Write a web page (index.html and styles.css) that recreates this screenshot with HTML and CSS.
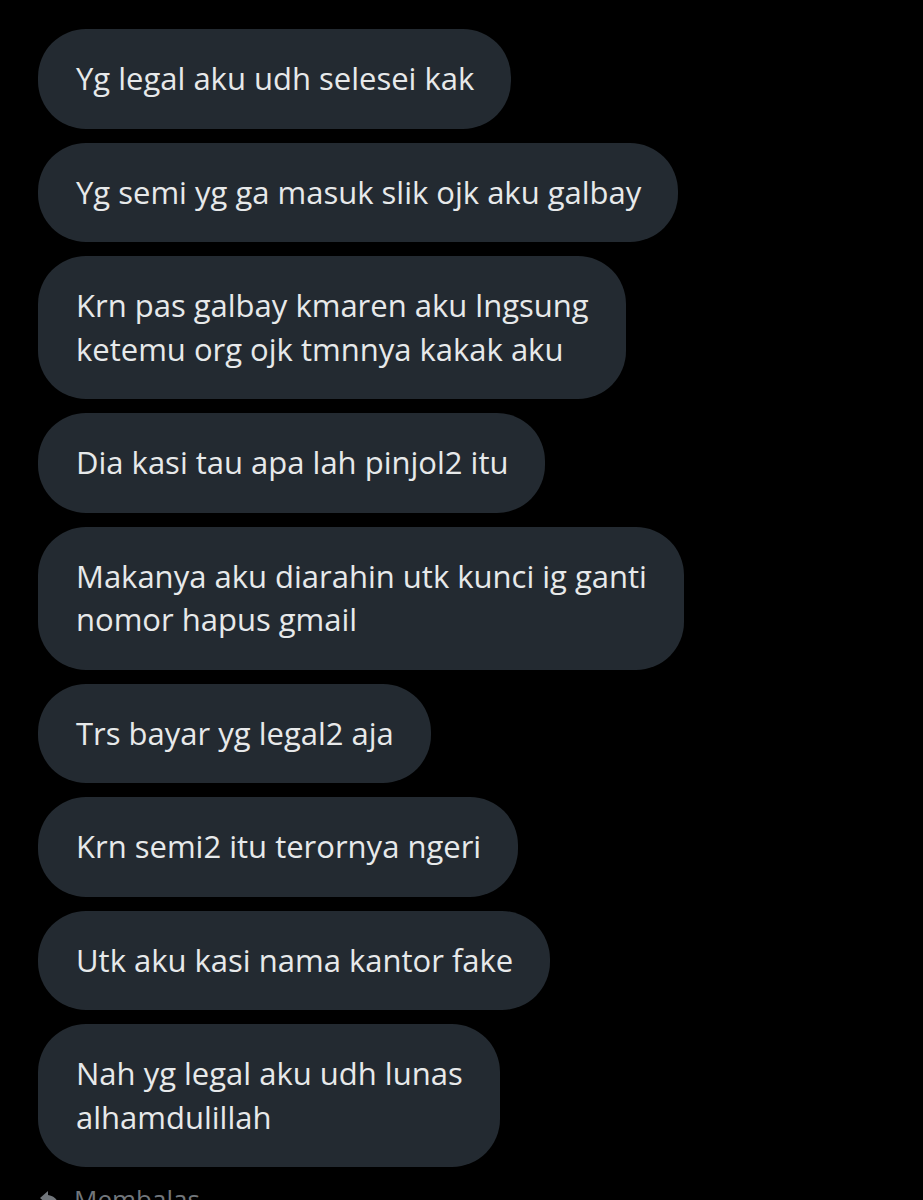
FILE: index.html
```html
<!DOCTYPE html>
<html lang="id">
<head>
<meta charset="utf-8">
<title>Pesan</title>
<link rel="stylesheet" href="styles.css">
</head>
<body>
<div class="thread">
  <div class="bubble">Yg legal aku udh selesei kak</div>
  <div class="bubble">Yg semi yg ga masuk slik ojk aku galbay</div>
  <div class="bubble">Krn pas galbay kmaren aku lngsung<br>ketemu org ojk tmnnya kakak aku</div>
  <div class="bubble">Dia kasi tau apa lah pinjol2 itu</div>
  <div class="bubble">Makanya aku diarahin utk kunci ig ganti<br>nomor hapus gmail</div>
  <div class="bubble">Trs bayar yg legal2 aja</div>
  <div class="bubble">Krn semi2 itu terornya ngeri</div>
  <div class="bubble">Utk aku kasi nama kantor fake</div>
  <div class="bubble">Nah yg legal aku udh lunas<br>alhamdulillah</div>
  <div class="reply">
    <svg class="reply-icon" viewBox="0 0 24 24" width="24" height="24"><path d="M10 4 2 11l8 7v-4.5c5 0 8.5 1.5 11 5.5-1-5.5-4-10-11-11V4z" fill="#71767b"/></svg>
    <span>Membalas</span>
  </div>
</div>
</body>
</html>
```
FILE: styles.css
```css
html, body {
  margin: 0;
  padding: 0;
  background: #000;
}
body {
  height: 1200px;
  overflow: hidden;
  font-family: "Open Sans", "Noto Sans", sans-serif;
}
.thread {
  display: flex;
  flex-direction: column;
  align-items: flex-start;
  gap: 14px;
  padding: 29px 0 0 38px;
}
.bubble {
  background: #232a31;
  color: #e7e9ea;
  font-size: 31px;
  line-height: 43.5px;
  padding: 28px 37px 28px 38px;
  border-radius: 48px;
  white-space: nowrap;
}
.reply {
  display: flex;
  align-items: center;
  gap: 12px;
  margin-top: 2px;
  color: #71767b;
  font-size: 26px;
  line-height: 32px;
}
.reply-icon {
  flex: none;
}
```
